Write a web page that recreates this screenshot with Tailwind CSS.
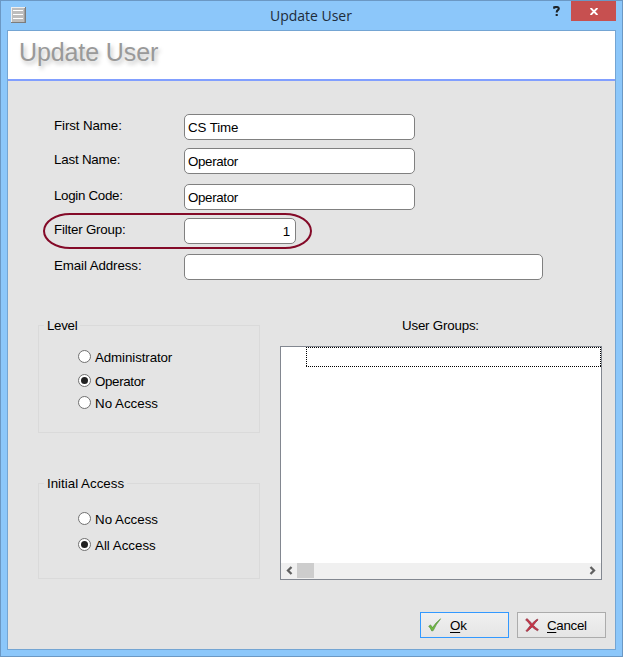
<!DOCTYPE html>
<html lang="en">
<head>
<meta charset="utf-8">
<title>Update User</title>
<script src="https://cdn.jsdelivr.net/npm/@tailwindcss/browser@4"></script>
</head>
<body class="w-[623px] h-[657px] overflow-hidden">
<div class="w-[623px] h-[657px] bg-[#8cc7fa] border border-[#6b98c4] px-1.5 pb-1.5 flex flex-col font-['Liberation_Sans',Arial,sans-serif] text-[13.33px] leading-4 tracking-[-0.1px] text-black">
  <!-- Title bar -->
  <header class="h-[29px] shrink-0 flex items-start">
    <svg class="ml-1 mt-1.5 w-[15px] h-[16px] shrink-0" viewBox="0 0 15 16" shape-rendering="crispEdges">
      <rect width="15" height="16" fill="#7c7c7c"/><rect width="14" height="15" fill="#eee"/><rect x="1" y="1" width="13" height="14" fill="#bdbdbd"/><rect x="13" y="1" width="1" height="14" fill="#a0a0a0"/>
      <path d="M2 3.5h10M2 7.5h10M2 11.5h10" stroke="#fff"/>
    </svg>
    <h1 class="ml-[244px] mt-[6px] w-[84px] whitespace-nowrap font-['Open_Sans',sans-serif] text-[14px] leading-[18px] tracking-[-0.02px] text-[#1e2c3a]">Update User</h1>
    <svg class="ml-[199px] mt-[5px] w-[8px] h-[10px]" viewBox="0 0 8 10"><path d="M1.2 2.8V1.3Q2 1 3.5 1Q5.8 1 5.8 2.6Q5.8 3.7 4.7 4.3Q3.7 4.8 3.7 6.5M3.7 8v2" fill="none" stroke="#1d2327" stroke-width="2.1"/></svg>
    <div class="ml-[10px] w-[45px] h-5 bg-[#c75050] flex items-center justify-center">
      <svg class="w-[8px] h-[7px] mt-px" viewBox="0 0 8 7"><path d="M.6 0L7.4 7M7.4 0L.6 7" stroke="#fff" stroke-width="1.9"/></svg>
    </div>
  </header>
  <main class="flex-1 border border-[#74a5d3] bg-[#e4e4e4] flex flex-col">
    <div class="h-[50px] shrink-0 bg-white border-b-2 border-[#819fff] pl-[11px] pt-[7px]">
      <h2 class="text-[25px] leading-[29px] tracking-[-0.1px] text-[#999] whitespace-nowrap [text-shadow:2px_3px_4px_rgba(0,0,0,0.25)]">Update User</h2>
    </div>
    <form class="pl-[46px] pt-[33px]">
      <label class="flex h-[26px] mb-2"><span class="w-[130px] pt-[4px]">First Name:</span><input class="w-[231px] h-[26px] border border-[#808080] rounded-[5px] bg-white pl-[3px] pt-px" value="CS Time"></label>
      <label class="flex h-[26px] mb-2.5"><span class="w-[130px] pt-[4px] tracking-[-0.2px]">Last Name:</span><input class="w-[231px] h-[26px] border border-[#808080] rounded-[5px] bg-white pl-[3px] tracking-[-0.35px]" value="Operator"></label>
      <label class="flex h-[26px] mb-2"><span class="w-[130px] pt-[4px] tracking-[-0.3px]">Login Code:</span><input class="w-[231px] h-[26px] border border-[#808080] rounded-[5px] bg-white pl-[3px] tracking-[-0.35px]" value="Operator"></label>
      <label class="relative flex h-[26px] mb-2.5"><span class="w-[130px] pt-[4px] tracking-[-0.2px]">Filter Group:</span><input class="w-[112px] h-[26px] border border-[#808080] rounded-[5px] bg-white text-right pr-[5px]" value="1">
        <span class="absolute left-[-11px] top-[-5px] w-[269px] h-[36px] border-2 border-[#840a28] rounded-[27px/18px]"></span></label>
      <label class="flex h-[26px]"><span class="w-[130px] pt-[4px]">Email Address:</span><input class="w-[359px] h-[26px] border border-[#808080] rounded-[5px] bg-white pl-[3px]" value=""></label>
    </form>
    <div class="flex pl-[30px] pt-[37px]">
      <div class="w-[222px]">
        <section class="h-[116px] flex flex-col">
          <div class="flex items-center h-4"><i class="w-1.5 h-px bg-[#dadada]"></i><h3 class="px-[3px] pt-[2px] tracking-[-0.3px]">Level</h3><i class="flex-1 h-px bg-[#dadada]"></i></div>
          <div class="-mt-2 flex-1 border border-t-0 border-[#dadada] pl-[39px]">
            <div class="flex h-[13px] mt-[25px]"><svg class="w-[13px] h-[13px]" viewBox="0 0 13 13"><circle cx="6.5" cy="6.5" r="6" fill="#fff" stroke="#707070"/></svg><span class="ml-[4px] whitespace-nowrap">Administrator</span></div>
            <div class="flex h-[13px] mt-[11px]"><svg class="w-[13px] h-[13px]" viewBox="0 0 13 13"><circle cx="6.5" cy="6.5" r="6" fill="#fff" stroke="#707070"/><circle cx="6.5" cy="6.5" r="3.5" fill="#212121"/></svg><span class="ml-[4px] whitespace-nowrap tracking-[-0.35px]">Operator</span></div>
            <div class="flex h-[13px] mt-[9px]"><svg class="w-[13px] h-[13px]" viewBox="0 0 13 13"><circle cx="6.5" cy="6.5" r="6" fill="#fff" stroke="#707070"/></svg><span class="ml-[4px] whitespace-nowrap tracking-normal">No Access</span></div>
          </div>
        </section>
        <section class="mt-[42px] h-[104px] flex flex-col">
          <div class="flex items-center h-4"><i class="w-1.5 h-px bg-[#dadada]"></i><h3 class="px-[3px] pt-[2px] tracking-normal">Initial Access</h3><i class="flex-1 h-px bg-[#dadada]"></i></div>
          <div class="-mt-2 flex-1 border border-t-0 border-[#dadada] pl-[39px]">
            <div class="flex h-[13px] mt-[29px]"><svg class="w-[13px] h-[13px]" viewBox="0 0 13 13"><circle cx="6.5" cy="6.5" r="6" fill="#fff" stroke="#707070"/></svg><span class="ml-[4px] whitespace-nowrap tracking-normal">No Access</span></div>
            <div class="flex h-[13px] mt-[13px]"><svg class="w-[13px] h-[13px]" viewBox="0 0 13 13"><circle cx="6.5" cy="6.5" r="6" fill="#fff" stroke="#707070"/><circle cx="6.5" cy="6.5" r="3.5" fill="#212121"/></svg><span class="ml-[4px] whitespace-nowrap tracking-normal">All Access</span></div>
          </div>
        </section>
      </div>
      <div class="ml-5 w-[322px]">
        <h3 class="pl-[122px] pt-px h-[29px] tracking-[-0.2px]">User Groups:</h3>
        <div class="h-[234px] border border-[#828790] bg-white flex flex-col">
          <svg class="ml-[25px] w-[295px] h-5" viewBox="0 0 295 20" shape-rendering="crispEdges"><path d="M0 .5h295M0 19.5h295M.5 0v20M294.5 0v20" stroke="#000" stroke-dasharray="1 1"/></svg>
          <div class="mt-auto h-4 bg-[#f0f0f0] flex items-start">
            <svg class="w-4 h-4" viewBox="0 0 16 16"><path d="M10.5 4L7 7.5L10.5 11" fill="none" stroke="#606060" stroke-width="2.3"/></svg>
            <div class="w-[17px] h-[15px] bg-[#cdcdcd]"></div>
            <svg class="ml-auto w-4 h-4" viewBox="0 0 16 16"><path d="M5.5 4L9 7.5L5.5 11" fill="none" stroke="#606060" stroke-width="2.3"/></svg>
          </div>
        </div>
      </div>
    </div>
    <footer class="mt-8 flex gap-2 pl-[412px]">
      <button type="button" class="w-[89px] h-[26px] border border-[#3399ff] bg-linear-to-b from-[#f0f0f0] to-[#e5e5e5] flex items-center pl-[7px]">
        <svg class="w-[14px] h-[14px]" viewBox="0 0 14 14"><path d="M.7 8.2L2.6 6.9L4.5 9.6Q8 4.3 12.6.8Q8 6.4 5.2 12.6L3.8 13Q2.6 10.2.7 8.2Z" fill="#72b943" stroke="#4c8a35" stroke-width=".6"/></svg>
        <span class="ml-2 mt-[2px] tracking-[-0.2px]"><u class="underline-offset-2">O</u>k</span>
      </button>
      <button type="button" class="w-[89px] h-[26px] border border-[#acacac] bg-linear-to-b from-[#f0f0f0] to-[#e5e5e5] flex items-center pl-[7px]">
        <svg class="w-[14px] h-[14px]" viewBox="0 0 14 14"><path d="M.6 1.8L2 .6Q4.5 2.8 7 5.7Q9.6 2.7 12.4 1L13 2Q10.5 4.3 8.4 7.3Q10.5 9.7 13.4 11.6L12.5 12.8Q9.7 11.3 7.1 8.9Q4.8 11.6 2.2 13.4L.9 12.9Q3.3 10.1 5.5 7.2Q3.5 4.5.6 1.8Z" fill="#c93245" stroke="#8b3b49" stroke-width=".7"/></svg>
        <span class="ml-2 mt-[2px] tracking-[-0.3px]"><u class="underline-offset-2">C</u>ancel</span>
      </button>
    </footer>
  </main>
</div>
</body>
</html>
